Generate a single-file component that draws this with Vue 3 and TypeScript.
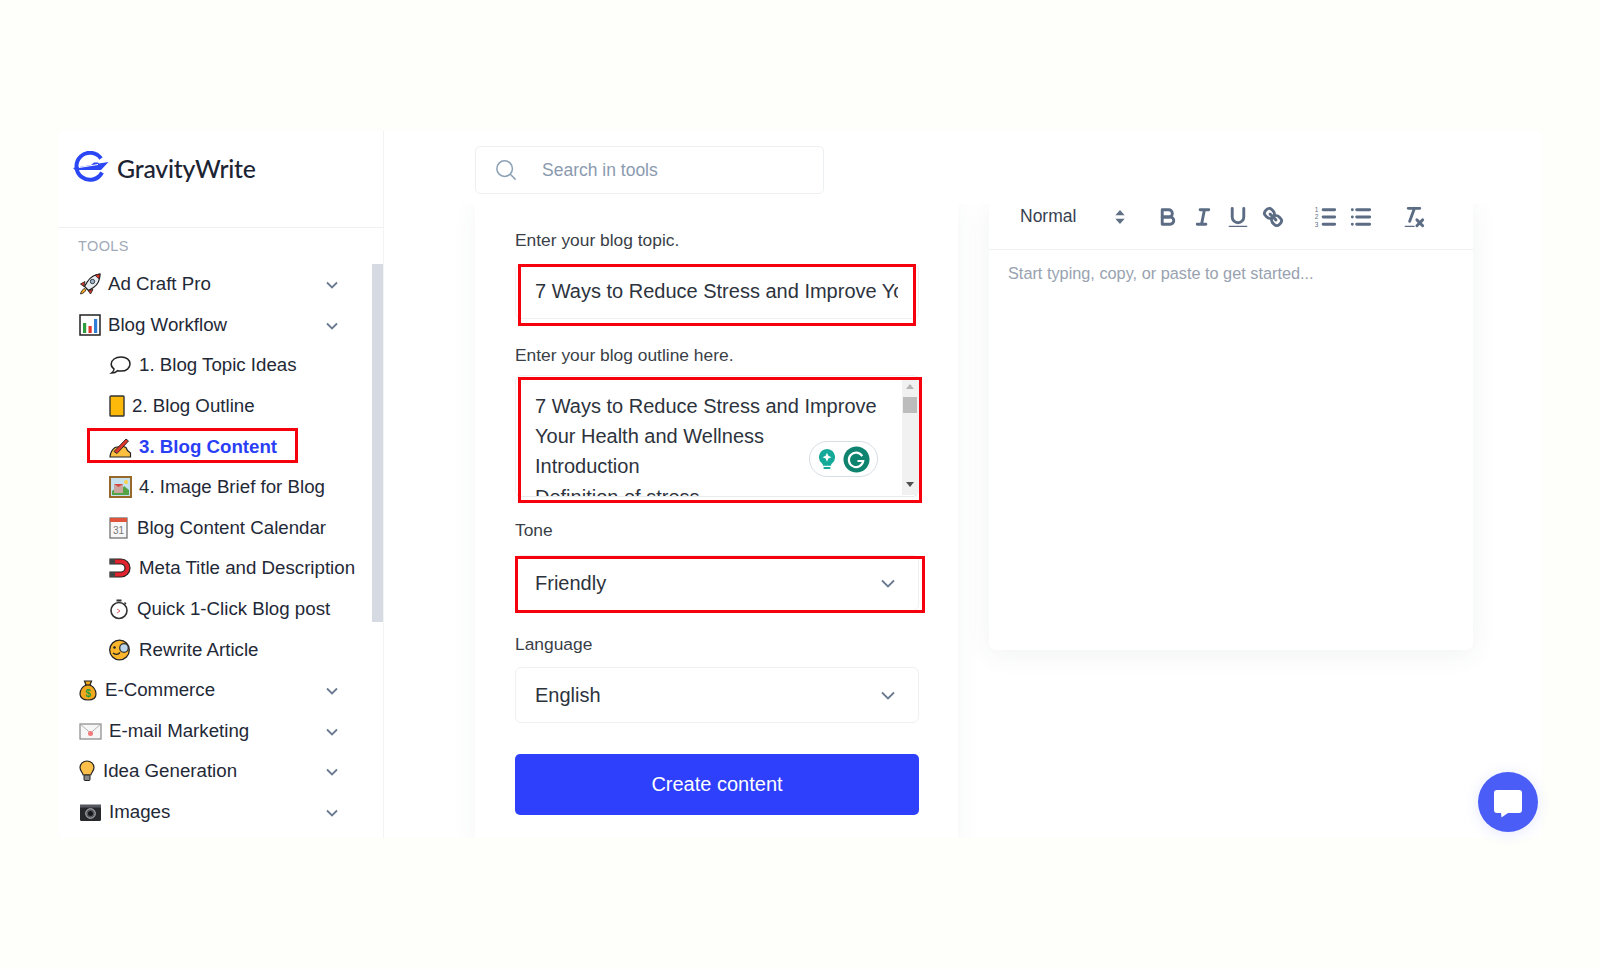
<script setup lang="ts">
interface NavItem { label: string; icon: string; width: number; sub?: boolean; chevron?: boolean; active?: boolean }

const icons: Record<string, string> = {
  rocket: '<path d="M21 1c-5.500.5-9.500 3-12.500 7.500l-3 5 4 4 5-3c4.500-3 6.500-7.500 6.500-13.500z" fill="#e8edf2" stroke="#1a1a1a" stroke-width="1.200"/><path d="M21 1c-1.700.2-3.300.6-4.800 1.300l3.500 3.500C20.500 4.500 20.900 2.800 21 1z" fill="#e0352b" stroke="#1a1a1a" stroke-width=".8"/><circle cx="13.500" cy="8.500" r="2.200" fill="#9bb6cf" stroke="#1a1a1a" stroke-width=".8"/><path d="M6 8.500 1.500 11 5 13.500zM14 16.500 11.500 21 9 17.500z" fill="#d9362b" stroke="#1a1a1a" stroke-width=".8"/><path d="M6 15.500c-2.300.5-4 2.800-4.500 5.500 2.800-.5 5-2.300 5.500-4.500z" fill="#f5a623" stroke="#1a1a1a" stroke-width=".8"/>',
  chart: '<rect x="1" y="1" width="20" height="20" fill="#fff" stroke="#222" stroke-width="1.500"/><rect x="4" y="9" width="3.200" height="10" fill="#2e9e3f"/><rect x="9.500" y="12" width="3.200" height="7" fill="#e0352b"/><rect x="15" y="5" width="3.200" height="14" fill="#2f7fd6"/>',
  speech: '<path d="M12 3c-5.500 0-9.800 3-9.800 7 0 2 1.100 3.800 2.900 5-.2 1.600-1.200 3-2.600 4 2.600 0 4.700-.8 6-2.300 1.100.3 2.300.4 3.500.4 5.400 0 9-3 9-7.100S17.400 3 12 3z" fill="#fff" stroke="#222" stroke-width="1.500"/>',
  notebook: '<rect x="1" y="1" width="14" height="20" rx=".8" fill="#fdb90a" stroke="#333" stroke-width="1.400"/>',
  hand: '<path d="M1 21c.3-4 2.200-7.500 5-9.500l7-1.500 4 1.500 1.500 3 3 2.500V21z" fill="#fcbf3f" stroke="#222" stroke-width="1.200"/><path d="M5 15.500 17 3l2.500 2L8 17.500z" fill="#e0352b" stroke="#222" stroke-width=".9"/>',
  picture: '<rect x="1" y="1" width="21" height="20" fill="#c7e0ee" stroke="#97682a" stroke-width="2"/><path d="M3 19v-4l4-3 5 3 3-5 5 4v5z" fill="#53a447"/><rect x="5" y="8" width="9" height="9" fill="#c9a7a0"/><path d="M5 8h9l-4.500 3z" fill="#d6463f"/><circle cx="17" cy="6" r="2" fill="#f7d24a"/>',
  calendar: '<rect x="1" y="1" width="17" height="20" fill="#f7f7f7" stroke="#666" stroke-width="1.200"/><rect x="1" y="1" width="17" height="4" fill="#e0533c"/><text x="9.500" y="17" font-size="10" font-family="Liberation Sans" fill="#7a7a7a" text-anchor="middle">31</text>',
  magnet: '<path d="M1 2h11a9 9 0 0 1 0 18H1v-5h11a4 4 0 0 0 0-8H1z" fill="#e1232e" stroke="#222" stroke-width="1.200"/><path d="M1 2h5v5H1zM1 15h5v5H1z" fill="#444"/>',
  watch: '<circle cx="10" cy="12.500" r="8" fill="#fff" stroke="#333" stroke-width="1.600"/><rect x="7.500" y="1.500" width="5" height="2" fill="#333"/><path d="m15.500 4.500 1.500 1.500" stroke="#333" stroke-width="1.500"/><path d="m8 11 3 2-3 2" fill="none" stroke="#d66" stroke-width="1"/>',
  monocle: '<circle cx="10.500" cy="11" r="9.800" fill="#fbb62c" stroke="#222" stroke-width="1.300"/><circle cx="15" cy="9" r="4.300" fill="#bcd7ec" stroke="#333" stroke-width="1.300"/><path d="M4 14c2 1.800 5 1.800 7-.5" fill="none" stroke="#222" stroke-width="1.300"/><circle cx="5.500" cy="8.500" r="1.300" fill="#222"/>',
  bag: '<path d="M5.500 2h7l-1.500 4c4 2 6 5.500 6 9 0 4-3.500 6-8 6s-8-2-8-6c0-3.500 2-7 6-9z" fill="#f0a81e" stroke="#222" stroke-width="1.200"/><path d="M6 6h6" stroke="#222" stroke-width="1.200"/><text x="9" y="18" font-size="10" font-weight="700" font-family="Liberation Sans" fill="#2a9d3a" text-anchor="middle">$</text>',
  mail: '<rect x="1" y="4" width="21" height="15" fill="#f6f6f6" stroke="#888" stroke-width="1.200"/><path d="m1 4 10.500 9L22 4" fill="none" stroke="#aaa" stroke-width=".9"/><circle cx="11.500" cy="13.500" r="2.500" fill="#f47a7a"/>',
  bulb: '<path d="M8 1c-3.800 0-7 2.900-7 6.500 0 3 2.400 4.800 3.200 7.500h7.600c.8-2.700 3.200-4.500 3.200-7.500C15 3.900 11.800 1 8 1z" fill="#fcc04a" stroke="#222" stroke-width="1.200"/><rect x="5" y="15" width="6" height="5.500" rx="1" fill="#888" stroke="#222" stroke-width="1"/>',
  camera: '<rect x="1" y="5" width="21" height="15" rx="1.500" fill="#26282c"/><rect x="1" y="3.500" width="21" height="3" fill="#55585e"/><circle cx="11.500" cy="12.500" r="4.800" fill="#55585e" stroke="#bbb" stroke-width="1"/><circle cx="11.500" cy="12.500" r="2.500" fill="#17181b"/>',
}

const nav: NavItem[] = [
  { label: 'Ad Craft Pro', icon: 'rocket', width: 22, chevron: true },
  { label: 'Blog Workflow', icon: 'chart', width: 22, chevron: true },
  { label: '1. Blog Topic Ideas', icon: 'speech', width: 23, sub: true },
  { label: '2. Blog Outline', icon: 'notebook', width: 16, sub: true },
  { label: '3. Blog Content', icon: 'hand', width: 23, sub: true, active: true },
  { label: '4. Image Brief for Blog', icon: 'picture', width: 23, sub: true },
  { label: 'Blog Content Calendar', icon: 'calendar', width: 21, sub: true },
  { label: 'Meta Title and Description', icon: 'magnet', width: 23, sub: true },
  { label: 'Quick 1-Click Blog post', icon: 'watch', width: 21, sub: true },
  { label: 'Rewrite Article', icon: 'monocle', width: 23, sub: true },
  { label: 'E-Commerce', icon: 'bag', width: 19, chevron: true },
  { label: 'E-mail Marketing', icon: 'mail', width: 23, chevron: true },
  { label: 'Idea Generation', icon: 'bulb', width: 17, chevron: true },
  { label: 'Images', icon: 'camera', width: 23, chevron: true },
]
</script>

<template>
  <div class="page">
    <div class="frame">
      <aside class="sidebar">
        <div class="brand">
          <svg class="logo" viewBox="0 0 38 32" aria-hidden="true">
            <path d="M30 7.500A13.500 13.500 0 1 0 31 21.500" fill="none" stroke="#2b47f5" stroke-width="4" />
            <path d="M2 17 20 14l3-2.500h4l1 1L37.500 11 30 19H4z" fill="#2b47f5" />
            <path d="M8 16.500 27 13.500" stroke="#fff" stroke-width="1" />
          </svg>
          <span class="brand-name">GravityWrite</span>
        </div>
        <div class="side-body">
          <nav class="nav">
            <div class="tools">TOOLS</div>
            <div
              v-for="item in nav"
              :key="item.label"
              class="row"
              :class="{ sub: item.sub, active: item.active }"
            >
              <svg class="emoji" :style="{ width: item.width + 'px' }" :viewBox="`0 0 ${item.width} 22`" v-html="icons[item.icon]" />
              <span class="row-label">{{ item.label }}</span>
              <svg v-if="item.chevron" class="chev" viewBox="0 0 12 8"><path d="m1 1.500 5 5 5-5" /></svg>
              <span v-if="item.active" class="mark mark-nav" />
            </div>
          </nav>
          <div class="side-scroll" />
        </div>
      </aside>

      <main class="main">
        <div class="topbar">
          <div class="search">
            <svg class="search-icon" viewBox="0 0 24 24"><circle cx="10.500" cy="10.500" r="8.500" /><path d="m17 17 5.500 5.500" /></svg>
            <span>Search in tools</span>
          </div>
        </div>

        <div class="content">
          <section class="form">
            <label class="label first">Enter your blog topic.</label>
            <div class="field input">
              <span class="input-text">7 Ways to Reduce Stress and Improve Your Health and Wellness</span>
              <span class="mark mark-topic" />
            </div>

            <label class="label">Enter your blog outline here.</label>
            <div class="field area">
              <div class="area-text">
                7 Ways to Reduce Stress and Improve<br />Your Health and Wellness<br />Introduction<br />Definition of stress
              </div>
              <div class="area-bar">
                <i class="arrow up" />
                <i class="thumb" />
                <i class="arrow down" />
              </div>
              <div class="grammarly">
                <svg viewBox="0 0 20 24" class="g-bulb">
                  <path d="M10 1a9 9 0 0 0-5.500 16c.8.7 1 1.500 1 2.500h9c0-1 .2-1.800 1-2.500A9 9 0 0 0 10 1z" fill="#15a99a" />
                  <path d="m10 5 1.500 3.500L15 10l-3.500 1.500L10 15l-1.500-3.500L5 10l3.500-1.500z" fill="#fff" />
                  <rect x="6" y="21" width="8" height="2" rx="1" fill="#15a99a" />
                </svg>
                <svg viewBox="0 0 28 28" class="g-logo">
                  <circle cx="14" cy="14" r="13.500" fill="#0e8470" />
                  <path d="M20 10.500a7.500 7.500 0 1 0 1 5h-6" fill="none" stroke="#fff" stroke-width="2.200" />
                </svg>
              </div>
              <span class="mark mark-area" />
            </div>

            <label class="label tone">Tone</label>
            <div class="field select tone-select">
              <span>Friendly</span>
              <svg class="sel-chev" viewBox="0 0 14 9"><path d="m1 1.500 6 6 6-6" /></svg>
              <span class="mark mark-tone" />
            </div>

            <label class="label lang">Language</label>
            <div class="field select">
              <span>English</span>
              <svg class="sel-chev" viewBox="0 0 14 9"><path d="m1 1.500 6 6 6-6" /></svg>
            </div>

            <button class="create" type="button">Create content</button>
          </section>

          <section class="editor">
            <div class="toolbar">
              <span class="picker">Normal</span>
              <svg class="updown" viewBox="0 0 8 12"><path d="M4 0 8 4.500H0zM4 12 0 7.500h8z" /></svg>
              <svg class="tb" viewBox="0 0 18 18"><path d="M5 4h4.500a2.500 2.500 0 0 1 0 5H5z" /><path d="M5 9h5.500a2.500 2.500 0 0 1 0 5H5z" /></svg>
              <svg class="tb" viewBox="0 0 18 18"><path d="M7 4h6M5 14h6M8 14l2-10" /></svg>
              <svg class="tb" viewBox="0 0 18 18"><path d="M5 3v6a4 4 0 0 0 8 0V3" /><path d="M3 15.500h12" class="thin" /></svg>
              <svg class="tb" viewBox="0 0 18 18"><path d="m7 7 4 4" /><path d="M8.900 4.577a3.476 3.476 0 0 1 .36 4.679A3.476 3.476 0 0 1 4.577 8.900C3.185 7.500 2.035 6.400 4.217 4.217S7.500 3.185 8.900 4.577z" /><path d="M13.423 9.100a3.476 3.476 0 0 0-4.679-.36 3.476 3.476 0 0 0 .36 4.679c1.392 1.392 2.500 2.542 4.679.36S14.815 10.500 13.423 9.100z" /></svg>
              <svg class="tb group" viewBox="0 0 18 18">
                <path d="M7 4h8M7 9h8M7 14h8" />
                <text x="2.500" y="5.600" class="num">1</text><text x="2.500" y="10.600" class="num">2</text><text x="2.500" y="15.600" class="num">3</text>
              </svg>
              <svg class="tb" viewBox="0 0 18 18"><path d="M6 4h9M6 9h9M6 14h9M3 4h.01M3 9h.01M3 14h.01" /></svg>
              <svg class="tb group" viewBox="0 0 18 18"><path d="M5 3h8M6 12 9.350 3M11 11l4 4M15 11l-4 4" /><path d="M3 15.500h6" class="thin" /></svg>
            </div>
            <div class="placeholder">Start typing, copy, or paste to get started...</div>
          </section>
        </div>
      </main>
    </div>

    <button class="chat" type="button" aria-label="Chat">
      <svg viewBox="0 0 30 30"><path d="M4 1h22a3 3 0 0 1 3 3v17a3 3 0 0 1-3 3H15l-6.500 4.500L8 24H4a3 3 0 0 1-3-3V4a3 3 0 0 1 3-3z" fill="#fff" /></svg>
    </button>
  </div>
</template>

<style>
html, body { margin: 0; background: #fefffa; }
</style>

<style scoped>
.page {
  position: relative;
  height: 969px;
  box-sizing: border-box;
  padding: 131px 59px 0 58px;
  font-family: "Liberation Sans", Arial, sans-serif;
  color: #1f2937;
  overflow: hidden;
}
.frame {
  display: flex;
  height: 707px;
  background: #fff;
  overflow: hidden;
}

/* sidebar */
.sidebar {
  width: 325px;
  flex: none;
  border-right: 1px solid #f1f3f5;
  box-sizing: content-box;
}
.brand {
  display: flex;
  align-items: center;
  height: 74px;
  padding: 0 0 22px 13px;
  border-bottom: 1px solid #eef0f2;
}
.logo { width: 38px; height: 32px; flex: none; margin-top: -2px; }
.brand-name {
  margin-left: 8px;
  font-family: Lato, sans-serif;
  font-size: 24.800px;
  font-weight: 500;
  color: #1c2433;
  letter-spacing: -.2px;
}
.side-body { display: flex; }
.nav { width: 314px; flex: none; padding-top: 10px; }
.tools {
  padding-left: 20px;
  font-size: 14.500px;
  line-height: 17px;
  color: #a0aab8;
  letter-spacing: .4px;
  margin-bottom: 9px;
}
.side-scroll {
  width: 11px;
  height: 358px;
  margin-top: 36px;
  background: #d5dae3;
}
.row {
  position: relative;
  display: flex;
  align-items: center;
  height: 40.600px;
  padding: 0 34px 0 21px;
  font-size: 18.700px;
  color: #1f2937;
}
.row.sub { padding-left: 51px; }
.row.active .row-label { color: #2a3ff5; font-weight: 700; }
.emoji { height: 22px; flex: none; margin-right: 7px; }
.row-label { white-space: nowrap; }
.chev {
  width: 12px;
  height: 8px;
  margin-left: auto;
  margin-top: 2px;
}
.chev path { fill: none; stroke: #6b7a90; stroke-width: 1.800; }

/* annotation boxes */
.mark {
  position: absolute;
  border: 3px solid #f5000c;
  pointer-events: none;
  box-sizing: border-box;
}
.mark-nav { left: 29px; top: 0; width: 211px; height: 35px; margin-top: 2px; }
.mark-topic { left: 2px; right: 2px; top: -1px; bottom: -8px; }
.mark-area { left: 2px; right: -4px; top: 1px; bottom: -7px; }
.mark-tone { left: -1px; right: -7px; top: 0; bottom: -3px; }

/* main */
.main { flex: 1; min-width: 0; display: flex; flex-direction: column; }
.topbar { height: 73px; flex: none; padding: 15px 0 0 91px; box-sizing: border-box; }
.search {
  display: flex;
  align-items: center;
  width: 349px;
  height: 48px;
  box-sizing: border-box;
  border: 1px solid #edf0f2;
  border-radius: 5px;
  padding-left: 19px;
  font-size: 17.500px;
  color: #8a9aaf;
}
.search-icon { width: 22px; height: 22px; margin-right: 25px; }
.search-icon circle, .search-icon path { fill: none; stroke: #8aa0b5; stroke-width: 1.600; }
.content {
  flex: 1;
  min-height: 0;
  display: flex;
  gap: 31px;
  align-items: flex-start;
  padding-left: 91px;
  overflow: hidden;
}
.form {
  width: 483px;
  flex: none;
  height: 650px;
  box-sizing: border-box;
  padding: 0 39px 0 40px;
  background: #fff;
  box-shadow: 0 0 24px rgba(60, 70, 90, .05);
}
.label {
  display: block;
  font-size: 17.400px;
  line-height: 20px;
  color: #3a3f47;
  margin-top: 26px;
}
.label.first { margin-top: 26px; }
.label.tone { margin-top: 23px; }
.label.lang { margin-top: 23px; }
.field {
  position: relative;
  width: 404px;
  box-sizing: border-box;
  border: 1px solid #eef0f3;
  border-radius: 6px;
  margin-top: 14px;
  font-size: 20px;
  color: #2d333d;
}
.input {
  display: flex;
  align-items: center;
  height: 55px;
  padding: 0 20px 0 19px;
  margin-top: 14px;
}
.input-text { display: block; width: 100%; overflow: hidden; white-space: nowrap; }
.area {
  height: 122px;
  margin-top: 10px;
  border-bottom-color: #e8eaee;
}
.area-text {
  height: 120px;
  padding: 15px 19px 0;
  box-sizing: border-box;
  line-height: 30.200px;
  overflow: hidden;
}
.area-bar {
  position: absolute;
  right: 0;
  top: 3px;
  bottom: 1px;
  width: 16px;
  background: #f1f1f1;
  display: flex;
  flex-direction: column;
  align-items: center;
}
.arrow { width: 0; height: 0; border: 4px solid transparent; }
.arrow.up { border-bottom: 5px solid #b5b5b5; border-top: 0; margin-top: 5px; }
.arrow.down { border-top: 5px solid #505050; border-bottom: 0; margin-top: auto; margin-bottom: 8px; }
.thumb { width: 14px; height: 16px; background: #bcbcbc; margin-top: 8px; }
.grammarly {
  position: absolute;
  left: 293px;
  top: 65px;
  width: 69px;
  height: 36px;
  box-sizing: border-box;
  border: 1px solid #d7dee4;
  border-radius: 18px;
  background: #fff;
  display: flex;
  align-items: center;
  padding-left: 8px;
  gap: 7px;
}
.g-bulb { width: 18px; height: 24px; flex: none; }
.g-logo { width: 27px; height: 27px; flex: none; }
.select {
  display: flex;
  align-items: center;
  justify-content: space-between;
  height: 56px;
  padding: 0 19px;
}
.tone-select { margin-top: 15px; }
.label.lang + .select { margin-top: 13px; }
.sel-chev { width: 14px; height: 9px; margin-right: 4px; }
.sel-chev path { fill: none; stroke: #6b7a90; stroke-width: 1.800; }
.create {
  display: block;
  width: 404px;
  height: 61px;
  margin-top: 31px;
  border: 0;
  border-radius: 5px;
  background: #2f40fd;
  color: #fff;
  font-family: inherit;
  font-size: 20px;
}

/* editor */
.editor {
  width: 484px;
  flex: none;
  height: 446px;
  background: #fff;
  border-radius: 0 0 7px 7px;
  box-shadow: 0 4px 26px rgba(60, 70, 90, .07);
}
.toolbar {
  display: flex;
  align-items: center;
  height: 46px;
  box-sizing: border-box;
  padding: 0 0 20px 31px;
  border-bottom: 1px solid #eff1f3;
}
.picker { font-size: 17.500px; color: #374151; width: 95px; flex: none; }
.updown { width: 10px; height: 14px; flex: none; fill: #5f6f85; margin-right: 30px; }
.tb { width: 26px; height: 26px; flex: none; margin-right: 9px; overflow: visible; }
.tb path { fill: none; stroke: #5b6c84; stroke-width: 2; stroke-linecap: round; stroke-linejoin: round; }
.tb path.thin { stroke-width: 1; }
.tb.group { margin-left: 18px; }
.num { font-size: 4.500px; font-family: "Liberation Sans", sans-serif; fill: #5b6c84; text-anchor: middle; }
.placeholder {
  padding: 14px 19px 0 19px;
  font-size: 16.300px;
  color: #98a2b0;
}

/* chat launcher */
.chat {
  position: absolute;
  left: 1478px;
  top: 772px;
  width: 60px;
  height: 60px;
  border: 0;
  border-radius: 50%;
  background: #4a5ef7;
  padding: 0;
  display: flex;
  align-items: center;
  justify-content: center;
  box-shadow: 0 2px 14px rgba(74, 94, 247, .15);
}
.chat svg { width: 30px; height: 30px; margin-top: 3px; }
</style>
